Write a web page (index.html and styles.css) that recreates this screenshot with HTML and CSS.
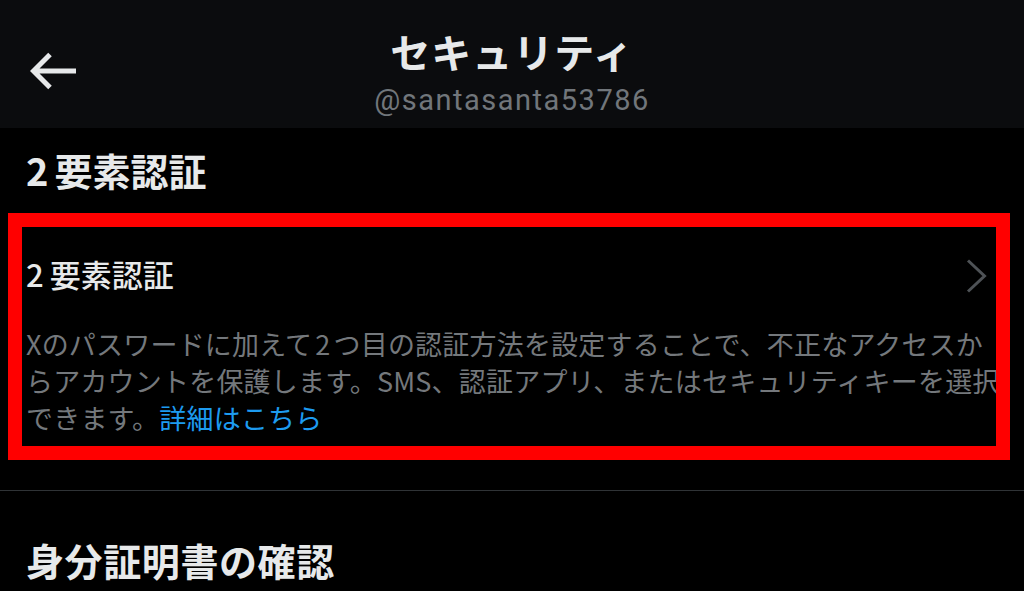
FILE: index.html
```html
<!DOCTYPE html>
<html lang="ja">
<head>
<meta charset="utf-8">
<title>セキュリティ</title>
<link rel="stylesheet" href="styles.css">
</head>
<body>
<div class="page">
  <header class="topbar">
    <div class="back">
      <svg width="46" height="38" viewBox="0 0 46 38" aria-hidden="true">
        <path d="M46 19 H4 M20 2.5 L3.5 19 L20 35.5" fill="none" stroke="#e7e9ea" stroke-width="5"/>
      </svg>
    </div>
    <div class="titles">
      <div class="title">セキュリティ</div>
      <div class="handle">@santasanta53786</div>
    </div>
    <div class="spacer"></div>
  </header>

  <section class="section">
    <h2 class="section-title"><span class="num">2</span>要素認証</h2>
    <div class="item">
      <div class="item-row">
        <div class="item-title"><span class="num-sm">2</span>要素認証</div>
        <svg class="chevron" width="22" height="34" viewBox="0 0 22 34" aria-hidden="true">
          <path d="M2 1.5 L18.5 17 L2 32.5" fill="none" stroke="#4e5256" stroke-width="3"/>
        </svg>
      </div>
      <p class="desc">
        <span class="line">Xのパスワードに加えて<span class="num-xs">2</span>つ目の認証方法を設定することで、不正なアクセスか</span>
        <span class="line">らアカウントを保護します。SMS、認証アプリ、またはセキュリティキーを選択</span>
        <span class="line">できます。<a class="link" href="#">詳細はこちら</a></span>
      </p>
      <div class="highlight"></div>
    </div>
  </section>

  <div class="divider"></div>

  <section class="section">
    <h2 class="section-title second">身分証明書の確認</h2>
  </section>
</div>
</body>
</html>
```

FILE: styles.css
```css
* { box-sizing: border-box; }

html, body {
  margin: 0;
  padding: 0;
  background: #000;
}

body {
  font-family: "Noto Sans CJK JP", "Noto Sans", sans-serif;
  color: #e7e9ea;
}

.page {
  width: 1024px;
  height: 591px;
  overflow: hidden;
  background: #000;
}

.topbar {
  height: 128px;
  background: #0b0c0e;
  display: grid;
  grid-template-columns: 1fr auto 1fr;
  align-items: start;
}

.back {
  padding-left: 30px;
  padding-top: 52px;
  display: flex;
}

.titles {
  padding-top: 27px;
  display: flex;
  flex-direction: column;
  align-items: center;
}

.title {
  font-size: 40px;
  line-height: 48px;
  font-weight: 700;
  letter-spacing: 1px;
  color: #e7e9ea;
}

.handle {
  margin-top: 9px;
  font-family: Roboto, "Liberation Sans", sans-serif;
  font-size: 29px;
  line-height: 32px;
  letter-spacing: 1.5px;
  color: #71767b;
}

.section {
  padding: 0 26px;
}

.section-title {
  margin: 19px 0 0;
  font-size: 38px;
  line-height: 46px;
  font-weight: 700;
  color: #e7e9ea;
}

.section-title.second {
  margin-top: 46px;
  letter-spacing: 0.6px;
}

.num { margin-right: 6px; }

.item {
  position: relative;
  margin-top: 61px;
}

.item-row {
  display: flex;
  align-items: center;
  justify-content: space-between;
  padding-right: 10px;
}

.item-title {
  font-size: 31px;
  line-height: 40px;
  font-weight: 500;
  color: #e7e9ea;
}

.num-sm { margin-right: 6px; }
.num-xs { margin: 0 3px; }

.chevron { display: block; margin-top: 4px; }

.desc {
  margin: 31px 0 0;
  font-size: 27px;
  line-height: 37px;
  letter-spacing: 0.2px;
  color: #74787c;
}

.line {
  display: block;
  white-space: nowrap;
}

.link {
  color: #1d9bf0;
  text-decoration: none;
}

.highlight {
  position: absolute;
  left: -18px;
  top: -41px;
  width: 1002px;
  height: 247px;
  border: 14px solid #ff0000;
  pointer-events: none;
}

.divider {
  margin-top: 54px;
  height: 1px;
  background: #2f3336;
}
```
